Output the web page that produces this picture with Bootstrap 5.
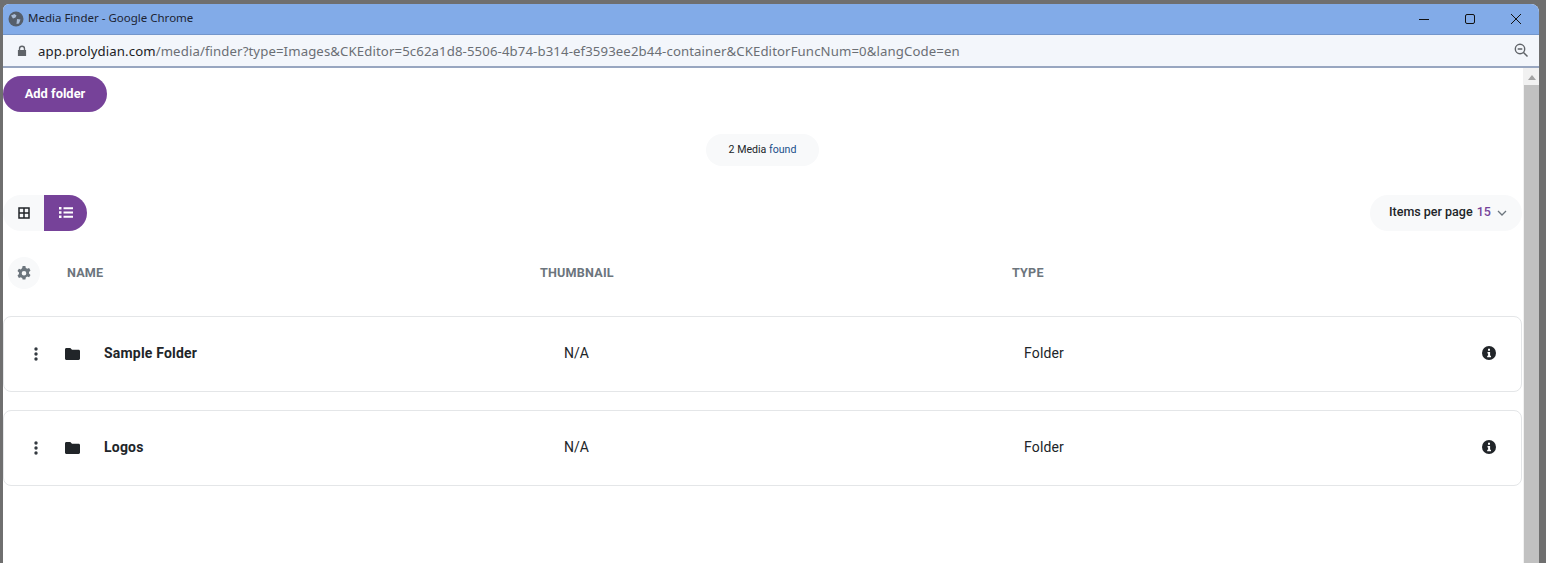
<!DOCTYPE html>
<html lang="en"><head><meta charset="utf-8"><title>Media Finder</title>
<link href="https://cdn.jsdelivr.net/npm/bootstrap@5.3.0/dist/css/bootstrap.min.css" rel="stylesheet">
<style>
html,body{height:563px;overflow:hidden;margin:0}
body{background:#6f6f6f;font-family:Roboto,sans-serif;color:#212529;padding:4px 7px 0 3px}
.win{height:559px;border-top-right-radius:8px;border-top-left-radius:6px;overflow:hidden;background:#fff}
.titlebar{height:31px;background:#82abe8;border-bottom:1px solid #7396cb;color:#1c2433;padding-left:5px}
.titlebar .ttl{margin-left:4px;padding-bottom:2px;font-family:"Noto Sans","Open Sans",sans-serif;font-size:11.5px}
.wctl{width:46px;text-align:center;line-height:0}
.toolbar{height:33px;background:#f3f6fb;border-bottom:2px solid #98a6c0;padding-left:14px;padding-right:10px;font:13.2px "Noto Sans","Open Sans",sans-serif;color:#6b6f75}
.toolbar b{font-weight:400;color:#202124}
.url{margin-left:11px;letter-spacing:.11px;white-space:nowrap}
.sbar{width:16px;background:#f1f1f1;padding:0 0 0 1px}
.sarrow{height:17px;padding-top:1px}
.sthumb{flex:1;background:#c1c1c1}
.pane{width:1520px;height:494px;overflow:hidden}
.addbtn{background:#764299;color:#fff;font-weight:700;font-size:12.9px;border:0;border-radius:18px;width:104px;height:36px;padding:0;margin-top:8px}
.found{width:113px;height:32px;background:#f8f9fa;border-radius:16px;font-size:10.6px;margin:22px 0 0 703px}
.found span{color:#1a4f8a}
.viewrow{margin-top:29px;padding-right:1px}
.vbtn{width:41px;height:36px;background:#f8f9fa;color:#212529;padding-bottom:1px}
.vbtn.on{background:#764299;width:43px;border-radius:0 18px 18px 0}
.vbtn.first{border-radius:18px 0 0 18px}
.perpage{width:152px;height:36px;border-radius:18px;background:#f8f9fa;font-size:12.5px;font-weight:500;padding-left:19px;padding-bottom:2px}
.perpage em{font-style:normal;color:#764299;font-weight:500;margin-left:4px}
.perpage svg{margin-left:6px;margin-top:2px}
.headrow{height:34px;margin-top:25px;color:#6c757d;font-weight:700;font-size:12.6px;letter-spacing:.2px}
.gear{width:32px;height:32px;border-radius:50%;background:#f8f9fa;margin-left:5px}
.c1{width:500px;padding-left:27px}.c2{width:472px}
.rowcard{height:76px;border:1px solid #e4e6e8;border-radius:8px;margin-right:1px;font-size:14px;padding-bottom:2px}
.rowcard+.rowcard{margin-top:18px}
.list{margin-top:26px}
.dots{width:16px;margin-left:24px}
.fold{margin-left:21px;width:15px}
.nm{width:484px;padding-left:24px;font-weight:700;letter-spacing:.2px}
.thumb{width:460px;letter-spacing:.05px}
.ty{flex:1;letter-spacing:.15px}
.inf{margin-right:25px;line-height:0}
</style></head><body>
<div class="win d-flex flex-column">
 <div class="titlebar d-flex align-items-center">
  <svg width="16" height="16" viewBox="0 0 16 16"><circle cx="8" cy="8" r="7.500" fill="#555e6b"/><path d="M3 4.500 6.500 3l2 1.500-1 2-2.500 1zM9 8l3.500.5L11 12.500 8.500 13z" fill="#a9bbd6"/></svg>
  <span class="ttl flex-grow-1">Media Finder - Google Chrome</span>
  <div class="wctl"><svg width="12" height="12" viewBox="0 0 12 12"><path d="M1 6.500h10" stroke="#111" fill="none"/></svg></div>
  <div class="wctl"><svg width="12" height="12" viewBox="0 0 12 12"><rect x="1.500" y="1.500" width="9" height="9" rx="1.500" stroke="#111" fill="none"/></svg></div>
  <div class="wctl"><svg width="12" height="12" viewBox="0 0 12 12"><path d="M1 1l10 10M11 1 1 11" stroke="#111" fill="none"/></svg></div>
 </div>
 <div class="toolbar d-flex align-items-center">
  <svg width="10" height="12" viewBox="0 0 11 13"><path d="M2 5.500V4a3.500 3.500 0 0 1 7 0v1.500h1V12H1V5.500zm1.500 0h4V4a2 2 0 0 0-4 0z" fill="#5f6368"/></svg>
  <span class="url flex-grow-1"><b>app.prolydian.com</b>/media/finder?type=Images&amp;CKEditor=5c62a1d8-5506-4b74-b314-ef3593ee2b44-container&amp;CKEditorFuncNum=0&amp;langCode=en</span>
  <svg width="15" height="15" viewBox="0 0 15 15"><circle cx="6" cy="6" r="4.700" fill="none" stroke="#5f6368" stroke-width="1.400"/><path d="M3.700 6h4.600M9.500 9.500l4 4" stroke="#5f6368" stroke-width="1.500"/></svg>
 </div>
 <div class="d-flex flex-grow-1">
  <div class="pane flex-grow-1">
   <button class="addbtn btn d-block">Add folder</button>
   <div class="found d-flex align-items-center justify-content-center">2 Media&nbsp;<span>found</span></div>
   <div class="viewrow d-flex justify-content-between align-items-center">
    <div class="d-flex">
     <div class="vbtn first d-flex align-items-center justify-content-center"><svg width="12" height="12" viewBox="0 0 12 12"><path d="M1 1h10v10H1zM6 1v10M1 6h10" fill="none" stroke="#212529" stroke-width="1.500"/></svg></div>
     <div class="vbtn on d-flex align-items-center justify-content-center"><svg width="14" height="11" viewBox="0 0 14 11"><path d="M0 0h2.500v2.500H0zM0 4.200h2.500v2.500H0zM0 8.400h2.500v2.500H0zM4.500.3H14v2H4.500zM4.500 4.500H14v2H4.500zM4.500 8.700H14v2H4.500z" fill="#fff"/></svg></div>
    </div>
    <div class="perpage d-flex align-items-center">Items per page <em>15</em><svg width="10" height="6" viewBox="0 0 10 6"><path d="M1 1l4 4 4-4" fill="none" stroke="#6c757d" stroke-width="1.300"/></svg></div>
   </div>
   <div class="headrow d-flex align-items-center">
    <div class="gear d-flex align-items-center justify-content-center flex-shrink-0"><svg width="16" height="16" viewBox="0 0 16 16"><path fill-rule="evenodd" d="M9.400 1 9.800 3a5.200 5.200 0 0 1 1.300.8l2-.7 1.400 2.400-1.500 1.400a5.200 5.200 0 0 1 0 1.600l1.500 1.400-1.400 2.400-2-.7a5.200 5.200 0 0 1-1.300.8l-.4 2H6.600L6.200 13a5.200 5.200 0 0 1-1.300-.8l-2 .7-1.400-2.400L3 9.100a5.200 5.200 0 0 1 0-1.600L1.500 6.100l1.400-2.400 2 .7A5.200 5.200 0 0 1 6.200 3l.4-2zM8 6a2.300 2.300 0 1 0 0 4.600A2.300 2.300 0 0 0 8 6z" fill="#6c757d"/></svg></div>
    <div class="c1">NAME</div><div class="c2">THUMBNAIL</div><div>TYPE</div>
   </div>
   <div class="list">
    <div class="rowcard d-flex align-items-center">
     <div class="dots text-center lh-1"><svg width="4" height="14" viewBox="0 0 4 14"><circle cx="2" cy="2" r="1.700" fill="#343a40"/><circle cx="2" cy="7" r="1.700" fill="#343a40"/><circle cx="2" cy="12" r="1.700" fill="#343a40"/></svg></div>
     <div class="fold lh-1"><svg width="15" height="12" viewBox="0 0 15 12"><path d="M0 1.500C0 .7.600 0 1.400 0h3.900l1.700 1.800h6.600c.8 0 1.400.6 1.400 1.400v7.300c0 .8-.6 1.400-1.400 1.400H1.400C.6 12 0 11.300 0 10.500z" fill="#212529"/></svg></div>
     <div class="nm">Sample Folder</div><div class="thumb">N/A</div><div class="ty">Folder</div>
     <div class="inf"><svg width="14" height="14" viewBox="0 0 14 14"><circle cx="7" cy="7" r="7" fill="#212529"/><path d="M6 2.800h2v1.900H6zM5.500 6h2.600v3.700H9v1.500H5.200V9.700h.9V7.400h-.6z" fill="#fff"/></svg></div>
    </div>
    <div class="rowcard d-flex align-items-center">
     <div class="dots text-center lh-1"><svg width="4" height="14" viewBox="0 0 4 14"><circle cx="2" cy="2" r="1.700" fill="#343a40"/><circle cx="2" cy="7" r="1.700" fill="#343a40"/><circle cx="2" cy="12" r="1.700" fill="#343a40"/></svg></div>
     <div class="fold lh-1"><svg width="15" height="12" viewBox="0 0 15 12"><path d="M0 1.500C0 .7.600 0 1.400 0h3.900l1.700 1.800h6.600c.8 0 1.400.6 1.400 1.400v7.300c0 .8-.6 1.400-1.400 1.400H1.400C.6 12 0 11.300 0 10.500z" fill="#212529"/></svg></div>
     <div class="nm">Logos</div><div class="thumb">N/A</div><div class="ty">Folder</div>
     <div class="inf"><svg width="14" height="14" viewBox="0 0 14 14"><circle cx="7" cy="7" r="7" fill="#212529"/><path d="M6 2.800h2v1.900H6zM5.500 6h2.600v3.700H9v1.500H5.200V9.700h.9V7.400h-.6z" fill="#fff"/></svg></div>
    </div>
   </div>
  </div>
  <div class="sbar d-flex flex-column">
   <div class="sarrow d-flex align-items-center justify-content-center"><svg width="8" height="5" viewBox="0 0 8 5"><path d="M4 0l4 5H0z" fill="#a3a3a3"/></svg></div>
   <div class="sthumb"></div>
  </div>
 </div>
</div>
<script src="https://cdn.jsdelivr.net/npm/bootstrap@5.3.0/dist/js/bootstrap.bundle.min.js"></script>
</body></html>
